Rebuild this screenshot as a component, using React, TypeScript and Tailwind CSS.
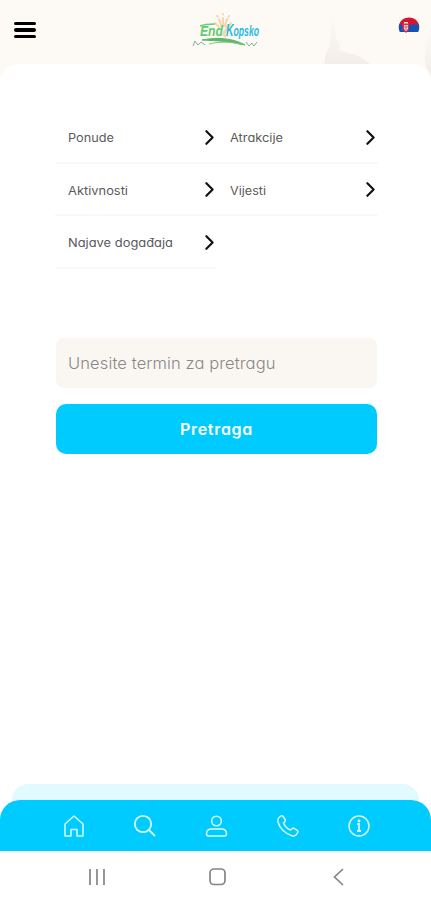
import { ChevronRight } from 'lucide-react';

const categories = [
  { name: 'Ponude', width: 46 },
  { name: 'Atrakcije', width: 53 },
  { name: 'Aktivnosti', width: 60 },
  { name: 'Vijesti', width: 36 },
  { name: 'Najave događaja', width: 105 },
];

function Logo() {
  return (
    <svg width="72" height="38" viewBox="0 0 72 38" fill="none" aria-label="Logo" className="overflow-visible">
      <g stroke="#f8d5aa" strokeWidth="2" strokeLinecap="round">
        <path d="M31 6v7M27 7l2 6M35 7l-2 6M23 11l4 4M39 11l-3 4M31 2v.5M25 4l.5.5M37 4l-.5.5" />
        <path d="M30 14c4-2 6 1 4 4s-3 4-1 6" strokeWidth="3" />
      </g>
      <text x="8" y="24" fontSize="14" fontStyle="italic" fontWeight="bold" fontFamily="Liberation Sans, sans-serif" fill="#5dce70" textLength="23" lengthAdjust="spacingAndGlyphs">End</text>
      <path d="M8 14c5-2 10-2 15-2" stroke="#65d075" strokeWidth="1.500" />
      <text x="34" y="24" fontSize="14" fontStyle="italic" fontWeight="bold" fontFamily="Liberation Sans, sans-serif" fill="#25bbdf" textLength="33" lengthAdjust="spacingAndGlyphs"><tspan fontSize="17">K</tspan>opsko</text>
      <path d="M10 28c15-3 31-2 43 5-14-4-27-4-43-5Z" fill="#5db66d" stroke="#5db66d" />
      <path d="m1 34 2-5 3 4 3-3 4 3M54 30l3 4 3-3 2 3 3-4" stroke="#8aac98" />
      <path d="M17 32c12-3 24-2 33 1" stroke="#83ca83" />
    </svg>
  );
}

function Flag() {
  return (
    <svg width="22" height="17" viewBox="0 0 22 17">
      <path d="M1 8C2 3.500 6 .5 11 .5S20 3.500 21 8Z" fill="#d5152d" />
      <path d="M1 7.500h20c.5 2.500.3 5-.8 7.500H1.800C.7 12.500.5 10 1 7.500Z" fill="#1452b5" />
      <path d="M4.500 6H11v6.500l-3 3.500-3.500-3.500Z" fill="#d92d42" />
      <path d="M6 5h4v1.500H6zM6 8h4v4l-2 2-2-2Z" fill="#f7dfe2" />
      <path d="M7.500 8h1v5h-1zM6 9.500h4v1H6z" fill="#d96374" />
    </svg>
  );
}

export default function App() {
  return (
    <div className="flex h-[900px] w-[431px] flex-col overflow-hidden bg-[#fdf9f5] font-['Inter',sans-serif] [font-feature-settings:'cv11']">
      <header className="relative flex h-16 shrink-0 items-start justify-between pl-[14px] pr-[11px]">
        <button className="mt-[22px] flex flex-col gap-[3px]" aria-label="Meni">
          <span className="h-[3px] w-[22px] rounded-sm bg-black" />
          <span className="h-[4px] w-[22px] rounded-sm bg-black" />
          <span className="h-[3px] w-[22px] rounded-sm bg-black" />
        </button>
        <div className="ml-[21px] mt-[12px]"><Logo /></div>
        <div className="mt-[17px]"><Flag /></div>
        {/* Faded skyline behind the header */}
        <svg className="absolute left-[320px] top-3" width="111" height="70" viewBox="0 0 111 70">
          <defs>
            <linearGradient id="haze" x1="0" y1="0" x2="0" y2="1">
              <stop offset="0" stopColor="#f3efe7" stopOpacity=".2" />
              <stop offset="1" stopColor="#f3efe8" />
            </linearGradient>
          </defs>
          <path d="M4 52q1-13 6-18l1-17 2-12 2 12 1 9 4 6-1 6 9 3q12 2 22 11Z" fill="url(#haze)" />
          <path d="M111 22c-7 8-7 24-5 33l5 9Z" fill="url(#haze)" />
        </svg>
      </header>

      <main className="relative flex flex-1 flex-col rounded-t-[18px] bg-white">
        <div className="ml-[55px] mt-[47px] grid w-[323px] grid-cols-2">
          {categories.map(({ name, width }) => (
            <a key={name} className="flex h-[52.500px] items-center justify-between border-b-2 border-[#f9f9f9] pl-[13px] pt-[2px] text-[#5a5a5a]">
              <svg width={width + 2} height="20" className="overflow-visible">
                <text x="0" y="14.500" fontSize="11.500" fill="currentColor" textLength={width} lengthAdjust="spacingAndGlyphs">{name}</text>
              </svg>
              <ChevronRight size={25} strokeWidth={2.100} className="-mr-[5px] text-[#111]" />
            </a>
          ))}
        </div>

        <form className="ml-14 mt-[69px] flex w-[321px] flex-col gap-4">
          <div className="flex h-[50px] items-center rounded-lg bg-[#faf7f2] pl-[12px] pt-px text-[16.500px] font-light tracking-[0.12px] text-[#888]">
            Unesite termin za pretragu
          </div>
          <button type="button" className="h-[50px] rounded-[10px] bg-[#00cbff] text-[16px] font-semibold tracking-[0.7px] text-white">
            Pretraga
          </button>
        </form>

        <div className="mt-auto px-3">
          <div className="h-4 rounded-t-[20px] bg-[#e0faff]" />
        </div>
      </main>

      <footer className="shrink-0 bg-white">
        <nav className="flex h-[51px] items-center justify-between rounded-t-[20px] bg-[#00cbff] pl-[62px] pr-[60px] text-[#d7fbff]">
          <svg width="24" height="24" viewBox="0 0 24 24" fill="none" stroke="currentColor" strokeWidth="1.500" strokeLinejoin="round">
            <path d="M3 10 12 2l9 8v12h-6v-6.500H9V22H3Z" />
          </svg>
          <svg width="24" height="24" viewBox="0 0 24 24" fill="none" stroke="currentColor" strokeWidth="1.800" strokeLinecap="round">
            <circle cx="10" cy="10" r="8.200" />
            <path d="m16 16 5.500 5.500" />
          </svg>
          <svg width="24" height="24" viewBox="0 0 24 24" fill="none" stroke="currentColor" strokeWidth="1.500" strokeLinejoin="round">
            <circle cx="11.500" cy="7" r="4.800" />
            <path d="M6.500 15h10c3 0 5 2 5 5 0 1.300-.7 2-2 2h-16c-1.300 0-2-.7-2-2 0-3 2-5 5-5Z" />
          </svg>
          <svg width="24" height="24" viewBox="0 0 24 24" fill="none" stroke="currentColor" strokeWidth="1.500" strokeLinejoin="round">
            <path d="M3 3.500 5 2c.8-.5 1.700-.3 2.200.5l2 3.200c.4.7.2 1.500-.4 2L7.500 9c1.200 3 4 5.800 7 7l1.500-1.300c.6-.6 1.400-.7 2-.3l3.200 2c.8.5 1 1.500.4 2.200L20 21c-1 1-3 1.200-4.500.6C9 19.500 3.500 14 2 8c-.4-1.800-.1-3.500 1-4.500Z" />
          </svg>
          <svg width="24" height="24" viewBox="0 0 24 24" fill="none" stroke="currentColor" strokeWidth="1.500">
            <circle cx="12" cy="12" r="10" />
            <path d="M10 10h2v7M10 17h4" strokeWidth="1.800" />
            <circle cx="12" cy="7" r=".7" fill="currentColor" />
          </svg>
        </nav>

        <div className="flex h-[49px] items-center justify-between pb-px pl-[85px] pr-[80px] pt-[3px] text-[#858585]">
          <svg width="24" height="24" viewBox="0 0 24 24" stroke="currentColor" strokeWidth="1.700">
            <path d="M5 4v16M12 4v16M19 4v16" />
          </svg>
          <svg width="24" height="24" viewBox="0 0 24 24" fill="none" stroke="currentColor" strokeWidth="1.700">
            <rect x="4" y="4" width="15" height="15.500" rx="4" />
          </svg>
          <svg width="24" height="24" viewBox="0 0 24 24" fill="none" stroke="currentColor" strokeWidth="1.700">
            <path d="m16 4-8.500 8 8.500 8" />
          </svg>
        </div>
      </footer>
    </div>
  );
}
